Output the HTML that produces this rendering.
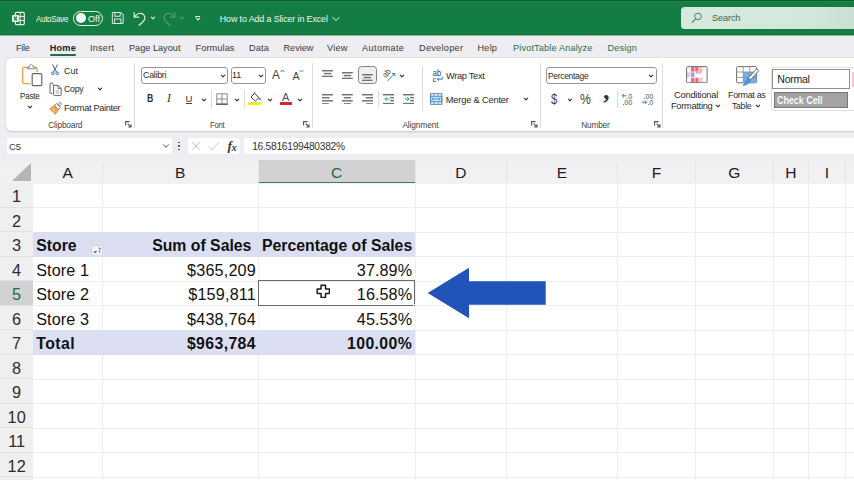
<!DOCTYPE html>
<html><head><meta charset="utf-8"><title>How to Add a Slicer in Excel</title>
<style>
*{box-sizing:border-box;margin:0;padding:0}
html,body{width:854px;height:480px;overflow:hidden;background:#eeedf1;font-family:"Liberation Sans",sans-serif;}
.a{position:absolute;white-space:nowrap}
#title{left:0;top:0;width:854px;height:36px;background:linear-gradient(180deg,#147d44 0,#147d44 33.5px,#166f3e 34px,#166f3e 35px,#84b99e 35px,#84b99e 36px)}
#title .dark{left:0;top:0;width:854px;height:2px;background:linear-gradient(180deg,#0b5c2e 0,#0b5c2e 1px,#22844d 1px,#22844d 2px)}
#tabs{left:0;top:36px;width:854px;height:22px;background:#eeedf1}
.tab{top:41px;font-size:10.5px;color:#3a3a3a;line-height:12px}
#ribbon{left:6px;top:58px;width:860px;height:72.5px;background:#fff;border-radius:6px;box-shadow:0 0.5px 2px rgba(0,0,0,.16)}
.rt{font-size:9px;color:#333;line-height:11px}
.gl{font-size:8.5px;color:#444;line-height:10px}
.fb{top:138px;height:15.6px;background:#fff;border-radius:3px}
#grid{left:0;top:183.5px;width:854px;height:297px;background:#fff}
.hdrbg{left:0;top:160.5px;width:854px;height:23px;background:#f1f0f3}
.ch{top:160px;height:23.4px;font-size:15.5px;line-height:25px;text-align:center;color:#1c1c1c}
.ch.sel{background:#d2d1d3;color:#1f6b43;border-bottom:1.2px solid #3f7d5e}
.chs{top:161px;width:1px;height:22px;background:#e6e5e8}
.rh{left:0;width:33.3px;height:24.5px;background:#efeff0;font-size:16.3px;line-height:26.3px;text-align:center;color:#2c2c2c;border-bottom:1px solid #e2e2e3}
.rh.sel{background:#d2d1d3;color:#1f6b43}
.vl{top:183.5px;width:1px;height:297px;background:#eeeeee}
.hl{left:33.3px;width:821px;height:1px;background:#eeeeee}
.band,.band2{left:33.3px;width:381.5px;height:24.5px;background:#dcdff2}
.c{font-size:16.2px;line-height:27.2px;height:24.5px;color:#111}
.c.b{font-size:15.8px}
.la{letter-spacing:0.1px}
.lb{letter-spacing:0.18px}
.lc{letter-spacing:0.08px}
.r{text-align:right}
.b{font-weight:bold}
.tot{letter-spacing:0.5px}
.lbb{letter-spacing:0.4px}

</style></head><body>
<div class="a" id="title"><div class="a dark"></div></div>
<svg class="a" style="left:11px;top:11px" width="15" height="15" viewBox="0 0 15 15"><rect x="4.3" y="1.3" width="9" height="12.4" rx="1.2" fill="none" stroke="#e8f3ec" stroke-width="1.2"/><path d="M4.5 5.4H13M4.5 9.6H13M9.2 1.5V13.5" stroke="#e8f3ec" stroke-width="1" fill="none"/><rect x="1" y="4" width="7" height="7" rx="0.8" fill="#e8f3ec"/><path d="M3 5.6L6 9.4M6 5.6L3 9.4" stroke="#147d44" stroke-width="1.1"/></svg>
<div class="a" style="left:35.50px;top:13.80px;font-size:8.3px;line-height:10px;color:#eef7f1;letter-spacing:-0.300px;transform:scaleX(0.959);transform-origin:0 50%;">AutoSave</div>
<div class="a" style="left:73px;top:10.5px;width:29.5px;height:15px;border:1.2px solid #e6f2ea;border-radius:8px"></div>
<div class="a" style="left:75.5px;top:13px;width:10px;height:10px;border-radius:5px;background:#f4faf6"></div>
<div class="a" style="left:88.30px;top:13.80px;font-size:8.3px;line-height:10px;color:#f4faf6;transform:scaleX(1.092);transform-origin:0 50%;">Off</div>
<svg class="a" style="left:111px;top:11.3px" width="13.5" height="14" viewBox="0 0 15 15" preserveAspectRatio="none"><path d="M1.5 2.5a1 1 0 0 1 1-1H10.8L13.5 4.2V12.5a1 1 0 0 1-1 1H2.5a1 1 0 0 1-1-1Z" fill="none" stroke="#d9ece1" stroke-width="1.1"/><path d="M4.3 1.8V5.6H10.2V1.8M4 13.3V8.6H11V13.3" fill="none" stroke="#d9ece1" stroke-width="1.1"/></svg>
<svg class="a" style="left:132px;top:10px" width="16" height="17" viewBox="0 0 16 17"><path d="M2.2 2.6V7.2H6.8" fill="none" stroke="#dcede3" stroke-width="1.2" stroke-linecap="round" stroke-linejoin="round"/><path d="M2.6 6.8C5 3.2 9.3 2.4 11.6 4.6C13.8 6.8 13 10 10.5 12.2L7 15.3" fill="none" stroke="#dcede3" stroke-width="1.2" stroke-linecap="round"/></svg>
<svg class="a" style="left:148.80px;top:15.30px" width="8" height="6" viewBox="-4 -3 8 6"><path d="M-1.70 -0.90 L0 0.90 L1.70 -0.90" fill="none" stroke="#e6f2ea" stroke-width="1.1" stroke-linecap="round" stroke-linejoin="round"/></svg>
<svg class="a" style="left:161px;top:10px" width="16" height="17" viewBox="0 0 16 17"><g transform="translate(16,0) scale(-1,1)"><path d="M2.2 2.6V7.2H6.8" fill="none" stroke="#4f9c72" stroke-width="1.2" stroke-linecap="round" stroke-linejoin="round"/><path d="M2.6 6.8C5 3.2 9.3 2.4 11.6 4.6C13.8 6.8 13 10 10.5 12.2L7 15.3" fill="none" stroke="#4f9c72" stroke-width="1.2" stroke-linecap="round"/></g></svg>
<svg class="a" style="left:177.80px;top:15.30px" width="8" height="6" viewBox="-4 -3 8 6"><path d="M-1.70 -0.90 L0 0.90 L1.70 -0.90" fill="none" stroke="#4f9c72" stroke-width="1.1" stroke-linecap="round" stroke-linejoin="round"/></svg>
<div class="a" style="left:195px;top:15.8px;width:5.2px;height:1.2px;background:#dcede3"></div>
<svg class="a" style="left:193.50px;top:16.30px" width="8" height="6" viewBox="-4 -3 8 6"><path d="M-1.70 -0.90 L0 0.90 L1.70 -0.90" fill="none" stroke="#e6f2ea" stroke-width="1.1" stroke-linecap="round" stroke-linejoin="round"/></svg>
<div class="a" style="left:219.80px;top:13.60px;font-size:8.9px;line-height:11px;color:#eef7f2;letter-spacing:-0.108px;">How to Add a Slicer in Excel</div>
<svg class="a" style="left:331.80px;top:15.60px" width="8" height="6" viewBox="-4 -3 8 6"><path d="M-3.23 -1.71 L0 1.71 L3.23 -1.71" fill="none" stroke="#e0efe6" stroke-width="1" stroke-linecap="round" stroke-linejoin="round"/></svg>
<div class="a" style="left:680.8px;top:6.6px;width:180px;height:22.6px;border-radius:3.5px;background:linear-gradient(90deg,#d6e9dc 0%,#d3e7da 70%,#c8dfd0 100%)"></div>
<svg class="a" style="left:690px;top:11px" width="14" height="14" viewBox="0 0 14 14"><circle cx="8" cy="5.4" r="3.3" fill="none" stroke="#55806a" stroke-width="1"/><path d="M5.6 7.9L2.2 11.4" stroke="#55806a" stroke-width="1.1" stroke-linecap="round"/></svg>
<div class="a" style="left:712.00px;top:13.30px;font-size:9.2px;line-height:11px;color:#3f6651;letter-spacing:-0.130px;">Search</div>
<div class="a" id="tabs"></div>
<div class="a" style="left:16.00px;top:42.50px;font-size:9.2px;line-height:11px;color:#3b3b3b;letter-spacing:-0.275px;">File</div>
<div class="a" style="left:90.00px;top:42.50px;font-size:9.2px;line-height:11px;color:#3b3b3b;letter-spacing:0.198px;">Insert</div>
<div class="a" style="left:129.00px;top:42.50px;font-size:9.2px;line-height:11px;color:#3b3b3b;letter-spacing:-0.016px;">Page Layout</div>
<div class="a" style="left:195.50px;top:42.50px;font-size:9.2px;line-height:11px;color:#3b3b3b;letter-spacing:0.094px;">Formulas</div>
<div class="a" style="left:249.00px;top:42.50px;font-size:9.2px;line-height:11px;color:#3b3b3b;letter-spacing:0.189px;">Data</div>
<div class="a" style="left:283.50px;top:42.50px;font-size:9.2px;line-height:11px;color:#3b3b3b;letter-spacing:-0.033px;">Review</div>
<div class="a" style="left:327.00px;top:42.50px;font-size:9.2px;line-height:11px;color:#3b3b3b;letter-spacing:0.242px;">View</div>
<div class="a" style="left:362.00px;top:42.50px;font-size:9.2px;line-height:11px;color:#3b3b3b;letter-spacing:0.374px;">Automate</div>
<div class="a" style="left:419.00px;top:42.50px;font-size:9.2px;line-height:11px;color:#3b3b3b;letter-spacing:0.258px;">Developer</div>
<div class="a" style="left:477.50px;top:42.50px;font-size:9.2px;line-height:11px;color:#3b3b3b;letter-spacing:0.193px;">Help</div>
<div class="a" style="left:49.70px;top:42.50px;font-size:9.2px;line-height:11px;color:#262626;letter-spacing:0.180px;font-weight:bold;">Home</div>
<div class="a" style="left:49.5px;top:53.5px;width:26.5px;height:2px;border-radius:1px;background:#1f6f48"></div>
<div class="a" style="left:513.00px;top:42.50px;font-size:9.2px;line-height:11px;color:#2a7350;letter-spacing:0.134px;">PivotTable Analyze</div>
<div class="a" style="left:607.50px;top:42.50px;font-size:9.2px;line-height:11px;color:#2a7350;letter-spacing:0.172px;">Design</div>
<div class="a" id="ribbon"></div>
<svg class="a" style="left:20px;top:63px" width="24" height="25" viewBox="0 0 24 25"><path d="M8.6 4.4H4a1.4 1.4 0 0 0-1.4 1.4V19.2a1.4 1.4 0 0 0 1.4 1.4H10.6" fill="none" stroke="#e6a74c" stroke-width="1.4"/><path d="M14 4.4H15.6a1.4 1.4 0 0 1 1.4 1.4V9" fill="none" stroke="#e6a74c" stroke-width="1.4"/><path d="M7.4 5.8V4.2H9.3C9.7 2.2 10.6 1.3 11.3 1.3C12 1.3 12.9 2.2 13.3 4.2H15.2V5.8Z" fill="#fff" stroke="#7a7a7a" stroke-width="0.9" stroke-linejoin="round"/><rect x="12.2" y="10.6" width="9.6" height="12" rx="1.1" fill="#fff" stroke="#666" stroke-width="1.15"/></svg>
<div class="a" style="left:20.30px;top:90.60px;font-size:9.3px;line-height:11px;color:#2b2b2b;letter-spacing:-0.300px;transform:scaleX(0.872);transform-origin:0 50%;">Paste</div>
<svg class="a" style="left:25.70px;top:103.80px" width="8" height="6" viewBox="-4 -3 8 6"><path d="M-1.70 -0.90 L0 0.90 L1.70 -0.90" fill="none" stroke="#3c3c3c" stroke-width="1.2" stroke-linecap="round" stroke-linejoin="round"/></svg>
<svg class="a" style="left:49.9px;top:64px" width="10" height="12" viewBox="0 0 10 12"><path d="M2.6 0.8L6.6 8.2M7.4 0.8L3.4 8.2" stroke="#555" stroke-width="0.95" fill="none" stroke-linecap="round"/><circle cx="2.8" cy="9.4" r="1.4" fill="#cfe3f7" stroke="#2f7fd0" stroke-width="0.9"/><circle cx="7.2" cy="9.4" r="1.4" fill="#cfe3f7" stroke="#2f7fd0" stroke-width="0.9"/></svg>
<div class="a" style="left:64.30px;top:65.50px;font-size:9.3px;line-height:11px;color:#2b2b2b;transform:scaleX(0.962);transform-origin:0 50%;">Cut</div>
<svg class="a" style="left:48.5px;top:81.5px" width="14" height="15" viewBox="0 0 14 15"><path d="M4 3.2V2a1 1 0 0 0-1-1H2a1 1 0 0 0-1 1V10.5a1 1 0 0 0 1 1H3.4" fill="none" stroke="#666" stroke-width="1"/><path d="M4.6 3.4H9.2L12.2 6.4V12.6a1 1 0 0 1-1 1H5.6a1 1 0 0 1-1-1Z" fill="#fff" stroke="#666" stroke-width="1"/><path d="M9 3.6V6.6H12" fill="none" stroke="#666" stroke-width="0.9"/><path d="M6.6 9H10.2M6.6 11H10.2" stroke="#888" stroke-width="0.8"/></svg>
<div class="a" style="left:64.30px;top:84.20px;font-size:9.3px;line-height:11px;color:#2b2b2b;letter-spacing:-0.300px;transform:scaleX(0.947);transform-origin:0 50%;">Copy</div>
<svg class="a" style="left:96.30px;top:85.60px" width="8" height="6" viewBox="-4 -3 8 6"><path d="M-1.70 -0.90 L0 0.90 L1.70 -0.90" fill="none" stroke="#3c3c3c" stroke-width="1.2" stroke-linecap="round" stroke-linejoin="round"/></svg>
<svg class="a" style="left:49px;top:100.5px" width="14" height="14" viewBox="0 0 14 14"><g transform="translate(7.4 6.6) rotate(45)"><rect x="-1.1" y="-6.4" width="2.2" height="3.6" rx="0.8" fill="#fff" stroke="#666" stroke-width="0.9"/><rect x="-3" y="-3" width="6" height="3" rx="0.5" fill="#fff" stroke="#666" stroke-width="0.9"/><path d="M-3 0.4H3L4 5.6H-4Z" fill="#f0a94a" stroke="#e08f2c" stroke-width="0.8" stroke-linejoin="round"/><path d="M-1.4 2.2V5.2M1 2.8V5.2" stroke="#fbe3bd" stroke-width="0.7"/></g></svg>
<div class="a" style="left:64.30px;top:103.20px;font-size:9.3px;line-height:11px;color:#2b2b2b;letter-spacing:-0.300px;transform:scaleX(0.984);transform-origin:0 50%;">Format Painter</div>
<div class="a" style="left:48.30px;top:119.80px;font-size:8.3px;line-height:10px;color:#3f3f3f;letter-spacing:-0.166px;">Clipboard</div>
<svg class="a" style="left:124.8px;top:121.1px" width="7" height="7" viewBox="0 0 7 7"><path d="M0.6 4.6V0.6H4.6" fill="none" stroke="#555" stroke-width="1.1"/><path d="M2.6 2.6L6 6M6 3.2V6H3.2" fill="none" stroke="#555" stroke-width="1.1"/></svg>
<div class="a" style="left:134px;top:62.5px;width:1px;height:65px;background:#dcdcdc"></div>
<div class="a" style="left:140.5px;top:66.8px;width:87.8px;height:17px;border:1px solid #979797;border-radius:3px;background:#fff"></div>
<div class="a" style="left:142.80px;top:70.40px;font-size:9px;line-height:11px;color:#2b2b2b;letter-spacing:-0.300px;transform:scaleX(0.991);transform-origin:0 50%;">Calibri</div>
<svg class="a" style="left:219.20px;top:73.00px" width="8" height="6" viewBox="-4 -3 8 6"><path d="M-1.70 -0.90 L0 0.90 L1.70 -0.90" fill="none" stroke="#3c3c3c" stroke-width="1.2" stroke-linecap="round" stroke-linejoin="round"/></svg>
<div class="a" style="left:230.5px;top:66.8px;width:35.8px;height:17px;border:1px solid #979797;border-radius:3px;background:#fff"></div>
<div class="a" style="left:232.00px;top:70.40px;font-size:9px;line-height:11px;color:#2b2b2b;">11</div>
<svg class="a" style="left:257.20px;top:73.00px" width="8" height="6" viewBox="-4 -3 8 6"><path d="M-1.70 -0.90 L0 0.90 L1.70 -0.90" fill="none" stroke="#3c3c3c" stroke-width="1.2" stroke-linecap="round" stroke-linejoin="round"/></svg>
<div class="a" style="left:271.90px;top:68.00px;font-size:12.7px;line-height:15px;color:#444;transform:scaleX(0.92);transform-origin:0 50%;">A</div>
<svg class="a" style="left:279.5px;top:68.5px" width="5" height="4" viewBox="0 0 5 4"><path d="M0.6 3L2.5 1L4.4 3" fill="none" stroke="#555" stroke-width="0.9"/></svg>
<div class="a" style="left:292.40px;top:70.30px;font-size:10.6px;line-height:13px;color:#444;">A</div>
<svg class="a" style="left:299px;top:69px" width="5" height="4" viewBox="0 0 5 4"><path d="M0.6 1L2.5 3L4.4 1" fill="none" stroke="#3a9a8a" stroke-width="0.9"/></svg>
<div class="a" style="left:146.60px;top:92.00px;font-size:10.6px;line-height:13px;color:#333;font-weight:bold;transform:scaleX(0.82);transform-origin:0 50%;">B</div>
<div class="a" style="left:167.00px;top:91.70px;font-size:11.6px;line-height:14px;color:#333;font-style:italic;font-family:'Liberation Serif',serif;">I</div>
<div class="a" style="left:185.60px;top:92.80px;font-size:9.6px;line-height:12px;color:#333;">U</div>
<div class="a" style="left:185.5px;top:103.3px;width:6.5px;height:0.9px;background:#444"></div>
<svg class="a" style="left:199.80px;top:96.50px" width="8" height="6" viewBox="-4 -3 8 6"><path d="M-1.70 -0.90 L0 0.90 L1.70 -0.90" fill="none" stroke="#3c3c3c" stroke-width="1.2" stroke-linecap="round" stroke-linejoin="round"/></svg>
<div class="a" style="left:211px;top:90px;width:1px;height:18px;background:#dcdcdc"></div>
<svg class="a" style="left:215.5px;top:92.8px" width="12" height="12" viewBox="0 0 12 12"><rect x="0.8" y="0.8" width="10.4" height="10.4" fill="none" stroke="#8a8a8a" stroke-width="1"/><path d="M6 0.8V11.2M0.8 6H11.2" stroke="#8a8a8a" stroke-width="1"/><path d="M0.3 11.2H11.7" stroke="#555" stroke-width="1.3"/></svg>
<svg class="a" style="left:232.80px;top:96.50px" width="8" height="6" viewBox="-4 -3 8 6"><path d="M-1.70 -0.90 L0 0.90 L1.70 -0.90" fill="none" stroke="#3c3c3c" stroke-width="1.2" stroke-linecap="round" stroke-linejoin="round"/></svg>
<div class="a" style="left:244px;top:90px;width:1px;height:18px;background:#dcdcdc"></div>
<svg class="a" style="left:249px;top:90.6px" width="13" height="12" viewBox="0 0 13 12"><path d="M5.6 2.4L10 6.6L6.4 10.2L2 6Z" fill="#fff" stroke="#454545" stroke-width="1" stroke-linejoin="round"/><path d="M3.8 4.2L6.2 1.2" stroke="#454545" stroke-width="0.9" fill="none"/><path d="M10.9 6.2C11.7 7.4 12.1 8.2 11.6 9C11 9.6 10.1 9.2 10.1 8.4C10.1 7.6 10.5 7 10.9 6.2Z" fill="#2f6fc4"/></svg>
<div class="a" style="left:248.3px;top:102.2px;width:12.6px;height:2.4px;background:#e9ec2f"></div>
<svg class="a" style="left:265.60px;top:96.50px" width="8" height="6" viewBox="-4 -3 8 6"><path d="M-1.70 -0.90 L0 0.90 L1.70 -0.90" fill="none" stroke="#3c3c3c" stroke-width="1.2" stroke-linecap="round" stroke-linejoin="round"/></svg>
<div class="a" style="left:282.00px;top:91.20px;font-size:11px;line-height:13px;color:#505050;">A</div>
<div class="a" style="left:279.8px;top:102px;width:12.2px;height:2.8px;background:#d9232e"></div>
<svg class="a" style="left:296.20px;top:96.50px" width="8" height="6" viewBox="-4 -3 8 6"><path d="M-1.70 -0.90 L0 0.90 L1.70 -0.90" fill="none" stroke="#3c3c3c" stroke-width="1.2" stroke-linecap="round" stroke-linejoin="round"/></svg>
<div class="a" style="left:210.30px;top:119.80px;font-size:8.3px;line-height:10px;color:#3f3f3f;letter-spacing:-0.300px;transform:scaleX(0.936);transform-origin:0 50%;">Font</div>
<svg class="a" style="left:302.5px;top:121.1px" width="7" height="7" viewBox="0 0 7 7"><path d="M0.6 4.6V0.6H4.6" fill="none" stroke="#555" stroke-width="1.1"/><path d="M2.6 2.6L6 6M6 3.2V6H3.2" fill="none" stroke="#555" stroke-width="1.1"/></svg>
<div class="a" style="left:312px;top:62.5px;width:1px;height:65px;background:#dcdcdc"></div>
<svg class="a" style="left:321.6px;top:69.7px" width="11.21" height="7.16" viewBox="0 0 11.21 7.16" shape-rendering="geometricPrecision"><rect x="0" y="0" width="11.2" height="1.45" fill="#727272"/><rect x="1.8" y="2.85" width="7.6" height="1.45" fill="#727272"/><rect x="0" y="5.7" width="11.2" height="1.45" fill="#727272"/></svg>
<svg class="a" style="left:341.9px;top:71.5px" width="10.81" height="7.16" viewBox="0 0 10.81 7.16" shape-rendering="geometricPrecision"><rect x="0" y="0" width="10.8" height="1.45" fill="#727272"/><rect x="1.7" y="2.85" width="7.4" height="1.45" fill="#727272"/><rect x="0" y="5.7" width="10.8" height="1.45" fill="#727272"/></svg>
<div class="a" style="left:358.2px;top:66.4px;width:18.8px;height:17.7px;border:1.2px solid #838383;border-radius:3.5px;background:#efefef"></div>
<svg class="a" style="left:362.2px;top:73.6px" width="10.61" height="7.16" viewBox="0 0 10.61 7.16" shape-rendering="geometricPrecision"><rect x="0" y="0" width="10.6" height="1.45" fill="#727272"/><rect x="1.7" y="2.85" width="7.2" height="1.45" fill="#727272"/><rect x="0" y="5.7" width="10.6" height="1.45" fill="#727272"/></svg>
<svg class="a" style="left:381.5px;top:66.5px" width="15" height="16" viewBox="0 0 15 16"><text x="0.6" y="9" font-family="Liberation Sans,sans-serif" font-size="8.4" fill="#404040" transform="rotate(-48 4.6 6.6)" textLength="8.6" lengthAdjust="spacingAndGlyphs">ab</text><path d="M5.4 14L12.8 6.4M12.8 6.4H10M12.8 6.4V9.2" fill="none" stroke="#2f86c8" stroke-width="1"/></svg>
<svg class="a" style="left:397.50px;top:73.30px" width="8" height="6" viewBox="-4 -3 8 6"><path d="M-1.70 -0.90 L0 0.90 L1.70 -0.90" fill="none" stroke="#3c3c3c" stroke-width="1.2" stroke-linecap="round" stroke-linejoin="round"/></svg>
<svg class="a" style="left:321.6px;top:93.5px" width="11.21" height="10.61" viewBox="0 0 11.21 10.61" shape-rendering="geometricPrecision"><rect x="0" y="0" width="11.2" height="1.45" fill="#727272"/><rect x="0" y="3.05" width="7.4" height="1.45" fill="#727272"/><rect x="0" y="6.1" width="11.2" height="1.45" fill="#727272"/><rect x="0" y="9.15" width="6.8" height="1.45" fill="#727272"/></svg>
<svg class="a" style="left:341.9px;top:93.5px" width="10.81" height="10.61" viewBox="0 0 10.81 10.61" shape-rendering="geometricPrecision"><rect x="0" y="0" width="10.8" height="1.45" fill="#727272"/><rect x="1.9" y="3.05" width="7" height="1.45" fill="#727272"/><rect x="0" y="6.1" width="10.8" height="1.45" fill="#727272"/><rect x="1.9" y="9.15" width="7" height="1.45" fill="#727272"/></svg>
<svg class="a" style="left:361.7px;top:93.5px" width="11.01" height="10.61" viewBox="0 0 11.01 10.61" shape-rendering="geometricPrecision"><rect x="0" y="0" width="11" height="1.45" fill="#727272"/><rect x="3.6" y="3.05" width="7.4" height="1.45" fill="#727272"/><rect x="0" y="6.1" width="11" height="1.45" fill="#727272"/><rect x="4.2" y="9.15" width="6.8" height="1.45" fill="#727272"/></svg>
<div class="a" style="left:378.3px;top:91px;width:1px;height:17px;background:#dcdcdc"></div>
<svg class="a" style="left:383.4px;top:93.5px" width="11.01" height="10.31" viewBox="0 0 11.01 10.31" shape-rendering="geometricPrecision"><rect x="0" y="0" width="11" height="1.45" fill="#727272"/><rect x="7.2" y="2.95" width="3.8" height="1.45" fill="#727272"/><rect x="7.2" y="5.9" width="3.8" height="1.45" fill="#727272"/><rect x="0" y="8.85" width="11" height="1.45" fill="#727272"/></svg>
<svg class="a" style="left:383.6px;top:95.6px" width="6" height="6" viewBox="0 0 6 6"><path d="M5.4 3H1M2.8 1.2L0.8 3L2.8 4.8" fill="none" stroke="#3a9a84" stroke-width="1"/></svg>
<svg class="a" style="left:403.4px;top:93.5px" width="11.01" height="10.31" viewBox="0 0 11.01 10.31" shape-rendering="geometricPrecision"><rect x="0" y="0" width="11" height="1.45" fill="#727272"/><rect x="7.2" y="2.95" width="3.8" height="1.45" fill="#727272"/><rect x="7.2" y="5.9" width="3.8" height="1.45" fill="#727272"/><rect x="0" y="8.85" width="11" height="1.45" fill="#727272"/></svg>
<svg class="a" style="left:403.6px;top:95.6px" width="6" height="6" viewBox="0 0 6 6"><path d="M0.6 3H5M3.2 1.2L5.2 3L3.2 4.8" fill="none" stroke="#2e9a6e" stroke-width="1"/></svg>
<div class="a" style="left:422px;top:66px;width:1px;height:45px;background:#dcdcdc"></div>
<svg class="a" style="left:431px;top:68.6px" width="13" height="13.5" viewBox="0 0 13 13.5"><text x="1.8" y="6.6" font-family="Liberation Sans,sans-serif" font-size="8.2" fill="#3c3c3c" textLength="8.4" lengthAdjust="spacingAndGlyphs">ab</text><text x="1.4" y="12.6" font-family="Liberation Sans,sans-serif" font-size="7.6" fill="#3c3c3c">c</text><path d="M11.2 7.6V10.2H6.4M7.8 8.8L6.2 10.2L7.8 11.8" fill="none" stroke="#2f7fd0" stroke-width="1"/></svg>
<div class="a" style="left:445.80px;top:70.80px;font-size:9.3px;line-height:11px;color:#2b2b2b;letter-spacing:-0.300px;transform:scaleX(0.992);transform-origin:0 50%;">Wrap Text</div>
<svg class="a" style="left:430.3px;top:93.4px" width="12.5" height="12" viewBox="0 0 12.5 12"><rect x="0.7" y="0.7" width="11.1" height="10.6" fill="#fff" stroke="#4a86c0" stroke-width="1"/><path d="M4.2 0.7V3.2M8.2 0.7V3.2M4.2 8.8V11.3M8.2 8.8V11.3" stroke="#777" stroke-width="0.8"/><rect x="0.7" y="3.2" width="11.1" height="5.6" fill="#cfe3f7" stroke="#2f7fd0" stroke-width="0.9"/><path d="M2.2 6H10.2M3.6 4.8L2.2 6L3.6 7.2M8.8 4.8L10.2 6L8.8 7.2" fill="none" stroke="#2f7fd0" stroke-width="0.8"/></svg>
<div class="a" style="left:445.80px;top:94.60px;font-size:9.3px;line-height:11px;color:#2b2b2b;letter-spacing:-0.196px;">Merge &amp; Center</div>
<svg class="a" style="left:521.50px;top:96.40px" width="8" height="6" viewBox="-4 -3 8 6"><path d="M-1.70 -0.90 L0 0.90 L1.70 -0.90" fill="none" stroke="#3c3c3c" stroke-width="1.2" stroke-linecap="round" stroke-linejoin="round"/></svg>
<div class="a" style="left:402.40px;top:119.80px;font-size:8.3px;line-height:10px;color:#3f3f3f;letter-spacing:-0.089px;">Alignment</div>
<svg class="a" style="left:530.5px;top:121.1px" width="7" height="7" viewBox="0 0 7 7"><path d="M0.6 4.6V0.6H4.6" fill="none" stroke="#555" stroke-width="1.1"/><path d="M2.6 2.6L6 6M6 3.2V6H3.2" fill="none" stroke="#555" stroke-width="1.1"/></svg>
<div class="a" style="left:539.5px;top:62.5px;width:1px;height:65px;background:#dcdcdc"></div>
<div class="a" style="left:546px;top:66.6px;width:111px;height:17.4px;border:1px solid #979797;border-radius:3px;background:#fff"></div>
<div class="a" style="left:548.40px;top:70.90px;font-size:8.8px;line-height:11px;color:#2b2b2b;letter-spacing:-0.300px;transform:scaleX(0.96);transform-origin:0 50%;">Percentage</div>
<svg class="a" style="left:647.40px;top:73.20px" width="8" height="6" viewBox="-4 -3 8 6"><path d="M-1.70 -0.90 L0 0.90 L1.70 -0.90" fill="none" stroke="#3c3c3c" stroke-width="1.2" stroke-linecap="round" stroke-linejoin="round"/></svg>
<div class="a" style="left:551.20px;top:90.90px;font-size:14.2px;line-height:17px;color:#444;transform:scaleX(0.8);transform-origin:0 50%;">$</div>
<svg class="a" style="left:565.50px;top:97.00px" width="8" height="6" viewBox="-4 -3 8 6"><path d="M-1.53 -0.81 L0 0.81 L1.53 -0.81" fill="none" stroke="#3c3c3c" stroke-width="1.2" stroke-linecap="round" stroke-linejoin="round"/></svg>
<div class="a" style="left:579.60px;top:90.90px;font-size:14.2px;line-height:17px;color:#444;transform:scaleX(0.86);transform-origin:0 50%;">%</div>
<div class="a" style="left:602.90px;top:75.30px;font-size:26px;line-height:31px;color:#333;font-weight:bold;font-family:'Liberation Serif',serif;">,</div>
<div class="a" style="left:616.5px;top:91px;width:1px;height:17px;background:#dcdcdc"></div>
<svg class="a" style="left:621px;top:93px" width="13" height="12.5" viewBox="0 0 13 12.5"><path d="M5.6 2.8H1.2M3 1L1.2 2.8L3 4.6" fill="none" stroke="#2e9a8e" stroke-width="1"/><text x="7.4" y="5.6" font-family="Liberation Sans,sans-serif" font-size="6.6" fill="#4a4a4a">0</text><text x="3.6" y="11.8" font-family="Liberation Sans,sans-serif" font-size="6.6" fill="#4a4a4a" textLength="7.6" lengthAdjust="spacingAndGlyphs">00</text><circle cx="6.2" cy="5.2" r="0.5" fill="#4a4a4a"/><circle cx="2.6" cy="11.4" r="0.5" fill="#4a4a4a"/></svg>
<svg class="a" style="left:640.5px;top:93px" width="13.5" height="12.5" viewBox="0 0 13.5 12.5"><text x="4.6" y="5.6" font-family="Liberation Sans,sans-serif" font-size="6.6" fill="#4a4a4a" textLength="7.6" lengthAdjust="spacingAndGlyphs">00</text><circle cx="3.6" cy="5.2" r="0.5" fill="#4a4a4a"/><path d="M0.8 9.2H5.6M3.8 7.4L5.6 9.2L3.8 11" fill="none" stroke="#2f7fd0" stroke-width="1"/><text x="8.4" y="11.8" font-family="Liberation Sans,sans-serif" font-size="6.6" fill="#4a4a4a">0</text><circle cx="7.4" cy="11.4" r="0.5" fill="#4a4a4a"/></svg>
<div class="a" style="left:581.30px;top:119.80px;font-size:8.3px;line-height:10px;color:#3f3f3f;letter-spacing:-0.224px;">Number</div>
<svg class="a" style="left:653.7px;top:121.1px" width="7" height="7" viewBox="0 0 7 7"><path d="M0.6 4.6V0.6H4.6" fill="none" stroke="#555" stroke-width="1.1"/><path d="M2.6 2.6L6 6M6 3.2V6H3.2" fill="none" stroke="#555" stroke-width="1.1"/></svg>
<div class="a" style="left:662px;top:62.5px;width:1px;height:65px;background:#dcdcdc"></div>
<svg class="a" style="left:685.6px;top:65.8px" width="22" height="17.5" viewBox="0 0 22 17.5"><rect x="0.6" y="0.6" width="20.5" height="16.2" rx="1" fill="#fff"/><rect x="4.7" y="0.6" width="4.1" height="5.4" fill="#ec6a7a"/><rect x="8.8" y="0.6" width="4.1" height="5.4" fill="#ec6a7a"/><rect x="12.9" y="0.6" width="4.1" height="5.4" fill="#f7c6cc"/><rect x="0.6" y="6" width="4.1" height="5.4" fill="#f7c6cc"/><rect x="4.7" y="6" width="4.1" height="5.4" fill="#74aee6"/><rect x="4.7" y="11.4" width="4.1" height="5.4" fill="#ec6a7a"/><rect x="8.8" y="11.4" width="4.1" height="5.4" fill="#ec6a7a"/><rect x="12.9" y="11.4" width="4.1" height="5.4" fill="#f7c6cc"/><rect x="9.8" y="4.8" width="5.3" height="2.6" fill="#ec6a7a"/><path d="M0.6 6H21.1M0.6 11.4H21.1M4.7 0.6V16.8M8.8 0.6V16.8M12.9 0.6V16.8M17 0.6V16.8" stroke="#fdf3f4" stroke-width="0.8" fill="none"/><rect x="0.6" y="0.6" width="20.5" height="16.2" rx="1" fill="none" stroke="#6f6f6f" stroke-width="1"/></svg>
<div class="a" style="left:674.00px;top:89.80px;font-size:9.3px;line-height:11px;color:#2b2b2b;letter-spacing:-0.223px;">Conditional</div>
<div class="a" style="left:671.20px;top:100.90px;font-size:9.3px;line-height:11px;color:#2b2b2b;letter-spacing:-0.300px;transform:scaleX(0.999);transform-origin:0 50%;">Formatting</div>
<svg class="a" style="left:714.40px;top:103.40px" width="8" height="6" viewBox="-4 -3 8 6"><path d="M-1.70 -0.90 L0 0.90 L1.70 -0.90" fill="none" stroke="#3c3c3c" stroke-width="1.2" stroke-linecap="round" stroke-linejoin="round"/></svg>
<svg class="a" style="left:735.8px;top:65.8px" width="24" height="21" viewBox="0 0 24 21"><rect x="0.6" y="0.6" width="20" height="16.2" rx="1" fill="#fff" stroke="#707070" stroke-width="1"/><rect x="7.2" y="6" width="13" height="10.4" fill="#72b0ec"/><path d="M0.6 6H20.6M0.6 11.4H20.6M7.2 0.6V16.8M13.8 0.6V16.8" stroke="#8a8a8a" stroke-width="0.8" fill="none"/><path d="M22.8 4.6L14.6 13.8L12.4 11.8L20.8 2.8Z" fill="#fff" stroke="#666" stroke-width="0.9" stroke-linejoin="round"/><path d="M14.4 14C13.2 17.8 10.2 19.6 6.8 19.4C8.6 18 9.2 16.2 10 14.4C10.8 12.6 12.8 11.8 14.4 14Z" fill="#4a97de" stroke="#3a86d0" stroke-width="0.6"/></svg>
<div class="a" style="left:728.20px;top:89.80px;font-size:9.3px;line-height:11px;color:#2b2b2b;letter-spacing:-0.300px;transform:scaleX(0.958);transform-origin:0 50%;">Format as</div>
<div class="a" style="left:732.40px;top:100.90px;font-size:9.3px;line-height:11px;color:#2b2b2b;letter-spacing:-0.300px;transform:scaleX(0.932);transform-origin:0 50%;">Table</div>
<svg class="a" style="left:753.70px;top:103.40px" width="8" height="6" viewBox="-4 -3 8 6"><path d="M-1.70 -0.90 L0 0.90 L1.70 -0.90" fill="none" stroke="#3c3c3c" stroke-width="1.2" stroke-linecap="round" stroke-linejoin="round"/></svg>
<div class="a" style="left:770.5px;top:66.5px;width:90px;height:44.5px;border:1px solid #dedede;border-radius:3px;background:#fff"></div>
<div class="a" style="left:772.3px;top:69.2px;width:77.5px;height:19.6px;border:1.4px solid #8f8f8f;background:#fff"></div>
<div class="a" style="left:777.30px;top:72.70px;font-size:10.6px;line-height:13px;color:#222;letter-spacing:-0.292px;">Normal</div>
<div class="a" style="left:774px;top:92px;width:73.8px;height:15.6px;border:1.6px solid #767676;background:#a3a3a3"></div>
<div class="a" style="left:777.30px;top:93.70px;font-size:10.9px;line-height:13px;color:#fafafa;font-weight:bold;transform:scaleX(0.818);transform-origin:0 50%;">Check Cell</div>
<div class="a" style="left:852px;top:71.5px;width:4px;height:15.5px;background:#f4c3cb"></div>
<div class="a fb" style="left:6.5px;width:165px"></div>
<div class="a fb" style="left:188px;width:51.7px"></div>
<div class="a fb" style="left:244.3px;width:620px"></div>
<div class="a" style="left:9.00px;top:141.10px;font-size:9.5px;line-height:11px;color:#3a3a3a;">C5</div>
<svg class="a" style="left:162.00px;top:143.00px" width="8" height="6" viewBox="-4 -3 8 6"><path d="M-2.55 -1.35 L0 1.35 L2.55 -1.35" fill="none" stroke="#555" stroke-width="1" stroke-linecap="round" stroke-linejoin="round"/></svg>
<div class="a" style="left:178.4px;top:141.8px;width:1.5px;height:1.5px;background:#5a5a5a"></div>
<div class="a" style="left:178.4px;top:145.2px;width:1.5px;height:1.5px;background:#5a5a5a"></div>
<div class="a" style="left:178.4px;top:148.6px;width:1.5px;height:1.5px;background:#5a5a5a"></div>
<svg class="a" style="left:191px;top:141.4px" width="10" height="10" viewBox="0 0 10 10"><path d="M1.2 1.2L8.8 8.8M8.8 1.2L1.2 8.8" stroke="#c2c2c2" stroke-width="1"/></svg>
<svg class="a" style="left:207.5px;top:141.4px" width="12" height="10" viewBox="0 0 12 10"><path d="M0.8 5.5L4 8.8L11.2 1.2" stroke="#c2c2c2" stroke-width="1" fill="none"/></svg>
<div class="a" style="left:227.60px;top:137.90px;font-size:13.4px;line-height:16px;color:#3a3a3a;font-weight:bold;font-style:italic;font-family:'Liberation Serif',serif;">f</div>
<div class="a" style="left:231.60px;top:140.80px;font-size:10.6px;line-height:13px;color:#3a3a3a;font-weight:bold;font-style:italic;font-family:'Liberation Serif',serif;">x</div>
<div class="a" style="left:252.20px;top:140.70px;font-size:10.2px;line-height:12px;color:#333;letter-spacing:-0.250px;">16.5816199480382%</div>
<div class="a" id="grid"></div>
<div class="a hdrbg"></div>
<div class="a ch" style="left:33px;width:69.5px">A</div>
<div class="a ch" style="left:102.5px;width:155.5px">B</div>
<div class="a ch sel" style="left:258px;width:157px">C</div>
<div class="a ch" style="left:415px;width:91.5px">D</div>
<div class="a ch" style="left:506.5px;width:111px">E</div>
<div class="a ch" style="left:617.5px;width:78px">F</div>
<div class="a ch" style="left:695.5px;width:77.5px">G</div>
<div class="a ch" style="left:773px;width:35.5px">H</div>
<div class="a ch" style="left:808.5px;width:37px">I</div>
<div class="a ch" style="left:845.5px;width:8.5px"></div>
<div class="a chs" style="left:102px"></div>
<div class="a chs" style="left:257.5px"></div>
<div class="a chs" style="left:414.5px"></div>
<div class="a chs" style="left:506px"></div>
<div class="a chs" style="left:617px"></div>
<div class="a chs" style="left:695px"></div>
<div class="a chs" style="left:772.5px"></div>
<div class="a chs" style="left:808px"></div>
<div class="a chs" style="left:845px"></div>
<svg class="a" style="left:10px;top:162px" width="22" height="20" viewBox="0 0 22 20"><path d="M21 1 L21 19 L2 19 Z" fill="#b5b5b5"/></svg>
<div class="a rh" style="top:183px">1</div>
<div class="a rh" style="top:207.5px">2</div>
<div class="a rh" style="top:232px">3</div>
<div class="a rh" style="top:256.5px">4</div>
<div class="a rh sel" style="top:281px">5</div>
<div class="a rh" style="top:305.5px">6</div>
<div class="a rh" style="top:330px">7</div>
<div class="a rh" style="top:354.5px">8</div>
<div class="a rh" style="top:379px">9</div>
<div class="a rh" style="top:403.5px">10</div>
<div class="a rh" style="top:428px">11</div>
<div class="a rh" style="top:452.5px">12</div>
<div class="a rh" style="top:477px"></div>
<div class="a band" style="top:232px"></div>
<div class="a band" style="top:330px"></div>
<div class="a vl" style="left:102px"></div>
<div class="a vl" style="left:257.5px"></div>
<div class="a vl" style="left:414.5px"></div>
<div class="a vl" style="left:506px"></div>
<div class="a vl" style="left:617px"></div>
<div class="a vl" style="left:695px"></div>
<div class="a vl" style="left:772.5px"></div>
<div class="a vl" style="left:808px"></div>
<div class="a vl" style="left:845px"></div>
<div class="a hl" style="top:207px"></div>
<div class="a hl" style="top:231.5px"></div>
<div class="a hl" style="top:256px"></div>
<div class="a hl" style="top:280.5px"></div>
<div class="a hl" style="top:305px"></div>
<div class="a hl" style="top:329.5px"></div>
<div class="a hl" style="top:354px"></div>
<div class="a hl" style="top:378.5px"></div>
<div class="a hl" style="top:403px"></div>
<div class="a hl" style="top:427.5px"></div>
<div class="a hl" style="top:452px"></div>
<div class="a hl" style="top:476.5px"></div>
<div class="a band2" style="top:232px"></div>
<div class="a band2" style="top:330px"></div>
<div class="a c b" style="left:36.2px;width:65.8px;top:232px">Store</div>
<div class="a c b r" style="left:103px;width:148.4px;top:232px">Sum of Sales</div>
<div class="a c b r" style="left:258px;width:154.2px;top:232px">Percentage of Sales</div>
<div class="a c  la" style="left:36.2px;width:65.8px;top:256.5px">Store 1</div>
<div class="a c  r lb" style="left:103px;width:153px;top:256.5px">$365,209</div>
<div class="a c  r lc" style="left:258px;width:154.2px;top:256.5px">37.89%</div>
<div class="a c  la" style="left:36.2px;width:65.8px;top:281px">Store 2</div>
<div class="a c  r lb" style="left:103px;width:153px;top:281px">$159,811</div>
<div class="a c  r lc" style="left:258px;width:154.2px;top:281px">16.58%</div>
<div class="a c  la" style="left:36.2px;width:65.8px;top:305.5px">Store 3</div>
<div class="a c  r lb" style="left:103px;width:153px;top:305.5px">$438,764</div>
<div class="a c  r lc" style="left:258px;width:154.2px;top:305.5px">45.53%</div>
<div class="a c b tot" style="left:36.2px;width:65.8px;top:330px">Total</div>
<div class="a c b r lbb" style="left:103px;width:153px;top:330px">$963,784</div>
<div class="a c b r lbb" style="left:258px;width:154.2px;top:330px">100.00%</div>
<svg class="a" style="left:425px;top:265px" width="125" height="58" viewBox="425 265 125 58"><path d="M427.7 292.9L469 267.7V281.3H545.7V304.7H469V318.2Z" fill="#2253b8"/></svg>
<div class="a" style="left:257.6px;top:280.2px;width:157.2px;height:25.8px;border:1.1px solid #6a6a6a"></div>
<div class="a" style="left:412.8px;top:304.2px;width:3px;height:3px;background:#4a4a4a;border:0.5px solid #fff"></div>
<svg class="a" style="left:315.8px;top:283.6px" width="14.6" height="14.6" viewBox="0 0 15 15"><path d="M5.2 1.2H9.8V5.2H13.8V9.8H9.8V13.8H5.2V9.8H1.2V5.2H5.2Z" fill="#fff" stroke="#1a1a1a" stroke-width="1.5" stroke-linejoin="round"/></svg>
<svg class="a" style="left:90.8px;top:244.6px" width="12" height="10.6" viewBox="0 0 11 11" preserveAspectRatio="none"><rect x="0.4" y="0.4" width="10.2" height="10.2" rx="1" fill="#f3f4fa" stroke="#c9cce0" stroke-width="0.7"/><path d="M2.2 6.6H5.8L4 8.6Z" fill="#555"/><path d="M8 3V8.4M6.9 4.2L8 3L9.1 4.2" fill="none" stroke="#666" stroke-width="0.7"/></svg>

</body></html>
